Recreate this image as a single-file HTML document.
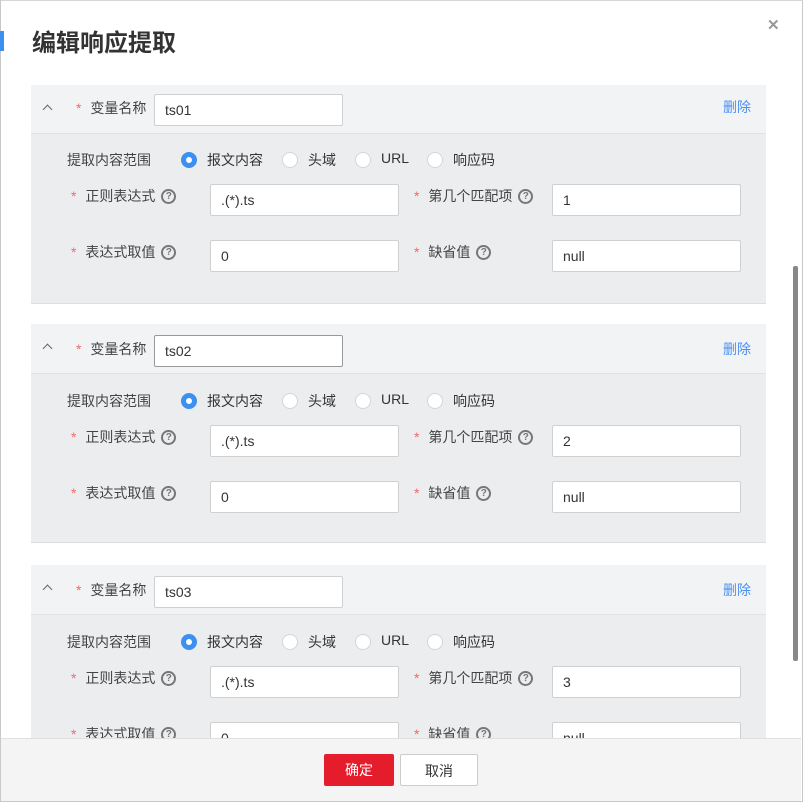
<!DOCTYPE html>
<html><head><meta charset="utf-8"><style>
*{box-sizing:border-box;margin:0;padding:0}
body{width:803px;height:802px;overflow:hidden;background:#fff;font-family:"Liberation Sans","Noto Sans CJK SC",sans-serif;font-size:14px;color:#333;position:relative}
.a{position:absolute;white-space:nowrap}
.dlg{position:absolute;left:0;top:0;width:803px;height:802px;border:1px solid #c8c8c8;border-top-color:#d6d6d6}
.bar{position:absolute;left:0;top:31px;width:4px;height:20px;background:#3d8ff0}
.title{left:32px;top:28px;font-size:24px;font-weight:bold;color:#333;line-height:32px}
.close{left:767px;top:16px;font-size:15px;color:#999;font-weight:bold}
.panel{position:absolute;left:31px;width:735px;height:219px;background:#ecedef;border-bottom:1px solid #dcdde0}
.ph{position:absolute;left:0;top:0;width:735px;height:49px;background:#f2f3f5;border-bottom:1px solid #e2e3e6}
.inp{position:absolute;height:32px;background:#fff;border:1px solid #d0d0d0;border-radius:2px;padding-left:10px;line-height:30px;font-size:14px;color:#333}
.star{color:#f06a6a;margin-right:5px}
.lab{color:#444;font-size:14px}
.q{display:inline-block;width:15px;height:15px;border:2px solid #777;border-radius:50%;font-size:10px;line-height:11px;text-align:center;color:#777;font-weight:bold;vertical-align:2px;margin-left:6px}
.r{position:absolute;width:16px;height:16px;border-radius:50%;background:#fff;border:1px solid #d5d5d5}
.r.on{background:#fff;border:5px solid #3d8ff0}
.chev{position:absolute;left:13px;top:21px;width:7px;height:7px;border-left:1.5px solid #666;border-top:1.5px solid #666;transform:rotate(45deg)}
.del{left:692px;top:12px;color:#4a90f0}
.foot{position:absolute;left:1px;top:738px;width:800px;height:63px;background:#f4f4f4;border-top:1px solid #e0e0e0}
.btn{position:absolute;top:754px;height:32px;border-radius:2px;text-align:center;line-height:32px;font-size:14px}
.sb{position:absolute;left:793px;top:266px;width:5px;height:395px;background:#888;border-radius:2px}
</style></head><body>
<div class="dlg"></div>
<div class="bar"></div>
<div class="a title">编辑响应提取</div>
<div class="a close">✕</div>

<div class="panel" style="top:85px">
 <div class="ph"><div class="chev"></div>
  <div class="a" style="left:45px;top:13px"><span class="star">*</span> <span class="lab">变量名称</span></div>
  <div class="inp" style="left:123px;top:9px;width:189px">ts01</div>
  <div class="a del">删除</div></div>
 <div class="a lab" style="left:36px;top:65px">提取内容范围</div>
 <div class="r on" style="left:150px;top:67px"></div><div class="a" style="left:176px;top:65px">报文内容</div>
 <div class="r" style="left:251px;top:67px"></div><div class="a" style="left:277px;top:65px">头域</div>
 <div class="r" style="left:324px;top:67px"></div><div class="a" style="left:350px;top:65px">URL</div>
 <div class="r" style="left:396px;top:67px"></div><div class="a" style="left:422px;top:65px">响应码</div>
 <div class="a" style="left:40px;top:101px"><span class="star">*</span> <span class="lab">正则表达式</span><span class="q">?</span></div>
 <div class="inp" style="left:179px;top:99px;width:189px">.(*).ts</div>
 <div class="a" style="left:383px;top:101px"><span class="star">*</span> <span class="lab">第几个匹配项</span><span class="q">?</span></div>
 <div class="inp" style="left:521px;top:99px;width:189px">1</div>
 <div class="a" style="left:40px;top:157px"><span class="star">*</span> <span class="lab">表达式取值</span><span class="q">?</span></div>
 <div class="inp" style="left:179px;top:155px;width:189px">0</div>
 <div class="a" style="left:383px;top:157px"><span class="star">*</span> <span class="lab">缺省值</span><span class="q">?</span></div>
 <div class="inp" style="left:521px;top:155px;width:189px">null</div>
</div>

<div class="panel" style="top:324px">
 <div class="ph" style="height:50px"><div class="chev"></div>
  <div class="a" style="left:45px;top:15px"><span class="star">*</span> <span class="lab">变量名称</span></div>
  <div class="inp" style="left:123px;top:11px;width:189px;border-color:#999">ts02</div>
  <div class="a del" style="top:15px">删除</div></div>
 <div class="a lab" style="left:36px;top:67px">提取内容范围</div>
 <div class="r on" style="left:150px;top:69px"></div><div class="a" style="left:176px;top:67px">报文内容</div>
 <div class="r" style="left:251px;top:69px"></div><div class="a" style="left:277px;top:67px">头域</div>
 <div class="r" style="left:324px;top:69px"></div><div class="a" style="left:350px;top:67px">URL</div>
 <div class="r" style="left:396px;top:69px"></div><div class="a" style="left:422px;top:67px">响应码</div>
 <div class="a" style="left:40px;top:103px"><span class="star">*</span> <span class="lab">正则表达式</span><span class="q">?</span></div>
 <div class="inp" style="left:179px;top:101px;width:189px">.(*).ts</div>
 <div class="a" style="left:383px;top:103px"><span class="star">*</span> <span class="lab">第几个匹配项</span><span class="q">?</span></div>
 <div class="inp" style="left:521px;top:101px;width:189px">2</div>
 <div class="a" style="left:40px;top:159px"><span class="star">*</span> <span class="lab">表达式取值</span><span class="q">?</span></div>
 <div class="inp" style="left:179px;top:157px;width:189px">0</div>
 <div class="a" style="left:383px;top:159px"><span class="star">*</span> <span class="lab">缺省值</span><span class="q">?</span></div>
 <div class="inp" style="left:521px;top:157px;width:189px">null</div>
</div>

<div class="panel" style="top:565px">
 <div class="ph" style="height:50px"><div class="chev"></div>
  <div class="a" style="left:45px;top:15px"><span class="star">*</span> <span class="lab">变量名称</span></div>
  <div class="inp" style="left:123px;top:11px;width:189px">ts03</div>
  <div class="a del" style="top:15px">删除</div></div>
 <div class="a lab" style="left:36px;top:67px">提取内容范围</div>
 <div class="r on" style="left:150px;top:69px"></div><div class="a" style="left:176px;top:67px">报文内容</div>
 <div class="r" style="left:251px;top:69px"></div><div class="a" style="left:277px;top:67px">头域</div>
 <div class="r" style="left:324px;top:69px"></div><div class="a" style="left:350px;top:67px">URL</div>
 <div class="r" style="left:396px;top:69px"></div><div class="a" style="left:422px;top:67px">响应码</div>
 <div class="a" style="left:40px;top:103px"><span class="star">*</span> <span class="lab">正则表达式</span><span class="q">?</span></div>
 <div class="inp" style="left:179px;top:101px;width:189px">.(*).ts</div>
 <div class="a" style="left:383px;top:103px"><span class="star">*</span> <span class="lab">第几个匹配项</span><span class="q">?</span></div>
 <div class="inp" style="left:521px;top:101px;width:189px">3</div>
 <div class="a" style="left:40px;top:159px"><span class="star">*</span> <span class="lab">表达式取值</span><span class="q">?</span></div>
 <div class="inp" style="left:179px;top:157px;width:189px">0</div>
 <div class="a" style="left:383px;top:159px"><span class="star">*</span> <span class="lab">缺省值</span><span class="q">?</span></div>
 <div class="inp" style="left:521px;top:157px;width:189px">null</div>
</div>

<div class="sb"></div>
<div class="foot"></div>
<div class="btn" style="left:324px;width:70px;background:#e51c2c;color:#fff">确定</div>
<div class="btn" style="left:400px;width:78px;background:#fff;border:1px solid #ccc;color:#333">取消</div>
</body></html>
